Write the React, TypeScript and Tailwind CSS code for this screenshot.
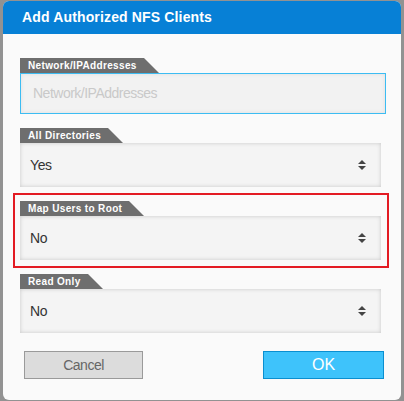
import React from "react";

const sans = { fontFamily: '"Liberation Sans", Arial, sans-serif' };

function Tab({ label }: { label: string }) {
  return (
    <div className="flex h-[15px]">
      <div className="bg-[#6e6e6e] h-[15px] pl-2 pr-[7px] flex items-center text-white font-bold text-[10px] tracking-[0.35px] leading-none">
        {label}
      </div>
      <span className="w-0 h-0 border-l-[15px] border-l-[#6e6e6e] border-t-[15px] border-t-transparent" />
    </div>
  );
}

function Arrows() {
  return (
    <svg width="10" height="10" viewBox="0 0 10 10" className="block">
      <polygon points="1,4 5,0 9,4" fill="#444" />
      <polygon points="1,6 9,6 5,10" fill="#444" />
    </svg>
  );
}

function SelectField({ label, value }: { label: string; value: string }) {
  return (
    <div className="flex flex-col">
      <Tab label={label} />
      <div className="w-[361px] h-[44px] bg-[#f4f4f4] shadow-[inset_0_0_4px_rgba(0,0,0,0.18)] flex items-center justify-between pl-[10px] pr-[14px]">
        <span className="text-[14px] text-[#333] tracking-[-0.4px]">{value}</span>
        <Arrows />
      </div>
    </div>
  );
}

export default function App() {
  return (
    <div className="w-[404px] h-[401px] bg-[#929292] pt-px pl-[3px] pr-[3px] pb-px" style={sans}>
      <div className="h-full rounded-[6px] bg-[#fafafa] overflow-hidden flex flex-col">
        <div className="h-[33px] bg-[#0780d6] flex items-center pl-[19px] text-white font-bold text-[14px] tracking-[0.15px]">
          Add Authorized NFS Clients
        </div>
        <div className="flex flex-col pl-[17px] pt-[24px]">
          <div className="flex flex-col">
            <Tab label="Network/IPAddresses" />
            <div className="w-[366px] h-[41px] border border-[#3cbcf2] bg-[#f2f2f2] shadow-[inset_0_0_4px_rgba(0,0,0,0.08)] flex items-center pl-3">
              <span className="text-[14px] text-[#c9c9c9] tracking-[-0.5px]">Network/IPAddresses</span>
            </div>
          </div>
          <div className="mt-[14px]">
            <SelectField label="All Directories" value="Yes" />
          </div>
          <div className="mt-[6px] -ml-[7px] w-[376px] border-2 border-[#e31b23] pt-[6px] pb-[6px] pl-[5px]">
            <SelectField label="Map Users to Root" value="No" />
          </div>
          <div className="mt-[6px]">
            <SelectField label="Read Only" value="No" />
          </div>
          <div className="mt-[18px] flex justify-between w-[364px] pl-[4px]">
            <button className="w-[119px] h-[28px] bg-[#dcdcdc] border border-[#9a9a9a] text-[#666] text-[14px] tracking-[-0.5px] flex items-center justify-center">
              Cancel
            </button>
            <button className="w-[121px] h-[28px] bg-[#3ec3fb] border border-[#0a8fd0] text-white text-[16px] flex items-center justify-center">
              OK
            </button>
          </div>
        </div>
      </div>
    </div>
  );
}
